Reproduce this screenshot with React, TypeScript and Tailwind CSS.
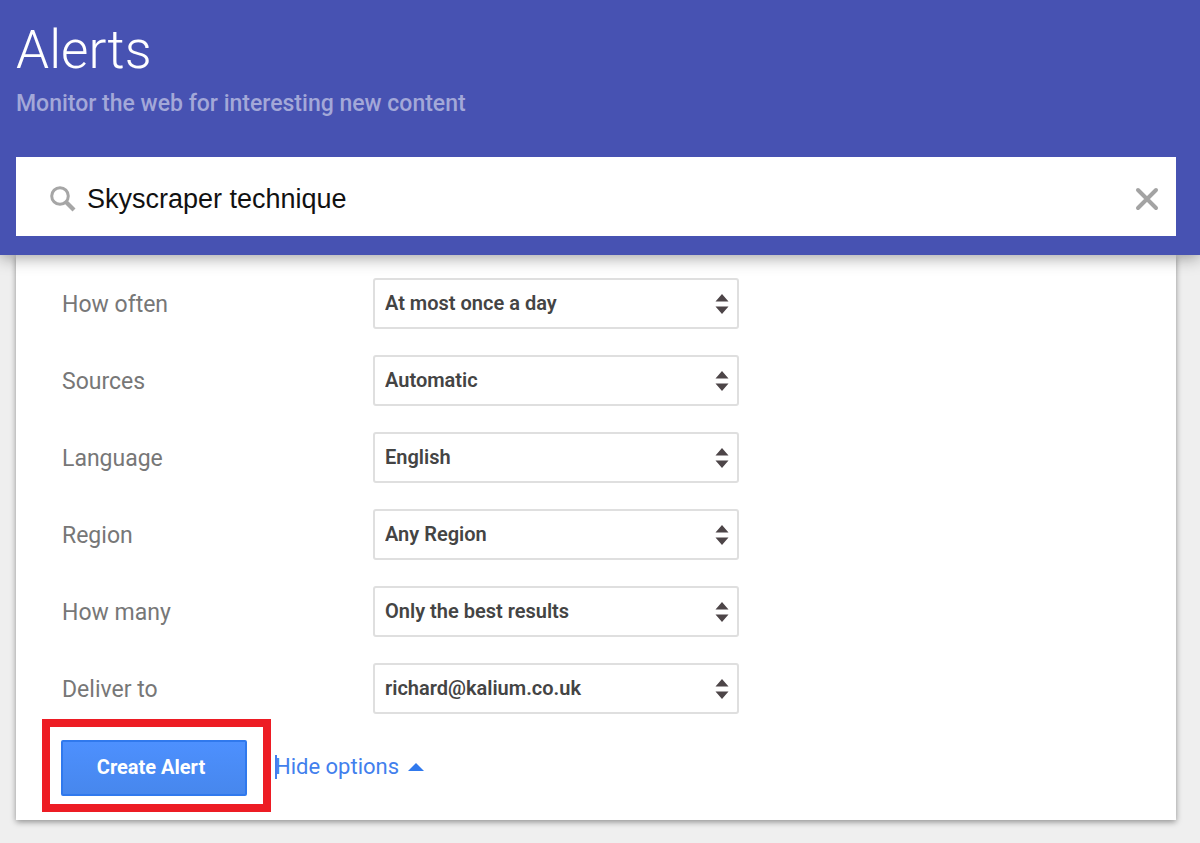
import { useState } from 'react'

const fields = [
  { id: 'often', label: 'How often', options: ['At most once a day', 'As-it-happens', 'At most once a week'] },
  { id: 'sources', label: 'Sources', options: ['Automatic', 'News', 'Blogs', 'Web'] },
  { id: 'language', label: 'Language', options: ['English', 'French', 'German'] },
  { id: 'region', label: 'Region', options: ['Any Region', 'United Kingdom', 'United States'] },
  { id: 'many', label: 'How many', options: ['Only the best results', 'All results'] },
  { id: 'deliver', label: 'Deliver to', options: ['richard@kalium.co.uk', 'RSS feed'] },
]

function SelectRow({ id, label, options }: { id: string; label: string; options: string[] }) {
  return (
    <div className="flex items-center">
      <label htmlFor={id} className="w-[311px] shrink-0 pt-[2px] text-[23px] leading-8 text-[#777]">
        {label}
      </label>
      <div className="grid w-full max-w-[366px] items-center">
        <select
          id={id}
          className="col-start-1 row-start-1 h-[51px] w-full appearance-none rounded-[3px] border-2 border-[#dfdfdf] bg-white pr-10 pb-[2px] pl-[10px] text-[20px] font-semibold text-[#444]"
        >
          {options.map((o) => (
            <option key={o}>{o}</option>
          ))}
        </select>
        <svg
          viewBox="0 0 14 20"
          className="pointer-events-none col-start-1 row-start-1 mr-[10px] h-5 w-[14px] justify-self-end fill-[#4d4548]"
          aria-hidden="true"
        >
          <path d="M7 0L13.5 7.5H0.5zM7 20L0.5 12.5H13.5z" />
        </svg>
      </div>
    </div>
  )
}

export default function App() {
  const [query, setQuery] = useState('Skyscraper technique')
  const [open, setOpen] = useState(true)

  return (
    <div className="min-h-screen bg-[#efefef] pb-[22px] font-[Roboto,sans-serif]">
      <header className="relative bg-[#4752b2] pt-[18px] pr-6 pb-[19px] pl-4 shadow-[0_2px_16px_rgba(0,0,0,0.4)]">
        <h1 className="text-[53px] leading-[64px] font-[350] text-white">Alerts</h1>
        <p className="mt-2 text-[23px] leading-7 font-medium text-[#a3a8d8]">
          Monitor the web for interesting new content
        </p>
        <div className="mt-[39px] flex h-[79px] items-center bg-white pt-1 pr-4 pl-[34px]">
          <svg viewBox="0 0 26 26" className="size-[26px] shrink-0 fill-none stroke-[#a6a6a6]" aria-hidden="true">
            <circle cx="10" cy="10" r="8.3" strokeWidth="3" />
            <path d="M16 16L24 24" strokeWidth="4.2" />
          </svg>
          <input
            type="text"
            aria-label="Create an alert about"
            value={query}
            onChange={(e) => setQuery(e.target.value)}
            className="ml-[11px] h-12 min-w-0 flex-1 pt-[2px] font-['Liberation_Sans',sans-serif] text-[27px] text-[#111] outline-none"
          />
          <button type="button" aria-label="Clear" onClick={() => setQuery('')}>
            <svg viewBox="0 0 26 26" className="size-[26px] fill-none stroke-[#a3a3a3]">
              <path d="M4 4L22 22M22 4L4 22" strokeWidth="4" strokeLinecap="round" />
            </svg>
          </button>
        </div>
      </header>

      <main className="mr-6 ml-4 bg-white pt-[23px] pb-2 shadow-[0_2px_6px_rgba(0,0,0,0.4)]">
        {open && (
          <div className="flex flex-col gap-[26px] pr-4 pl-[46px]">
            {fields.map((f) => (
              <SelectRow key={f.id} {...f} />
            ))}
          </div>
        )}
        <div className="mt-[5px] flex items-center pl-[26px]">
          <div className="border-8 border-[#ed1c24] pt-[13px] pr-4 pb-2 pl-[11px]">
            <button
              type="button"
              className="block h-14 w-[186px] rounded-[2px] border-2 border-[#3079ed] bg-linear-to-b from-[#4d90fe] to-[#4787ed] pr-[6px] pb-[2px] text-[20px] font-bold text-white"
            >
              Create Alert
            </button>
          </div>
          <button
            type="button"
            onClick={() => setOpen(!open)}
            className="relative ml-1 flex items-center pt-[2px] text-[22px] leading-7 text-[#427fed]"
          >
            {/* text caret sits on top of the first letter */}
            <span className="absolute left-0 h-6 w-[2px] bg-[#427fed]" />
            {open ? 'Hide options' : 'Show options'}
            <svg viewBox="0 0 16 8" className="ml-[9px] h-2 w-4 fill-[#3079ed]" aria-hidden="true">
              <path d="M8 0L16 8H0z" />
            </svg>
          </button>
        </div>
      </main>
    </div>
  )
}
